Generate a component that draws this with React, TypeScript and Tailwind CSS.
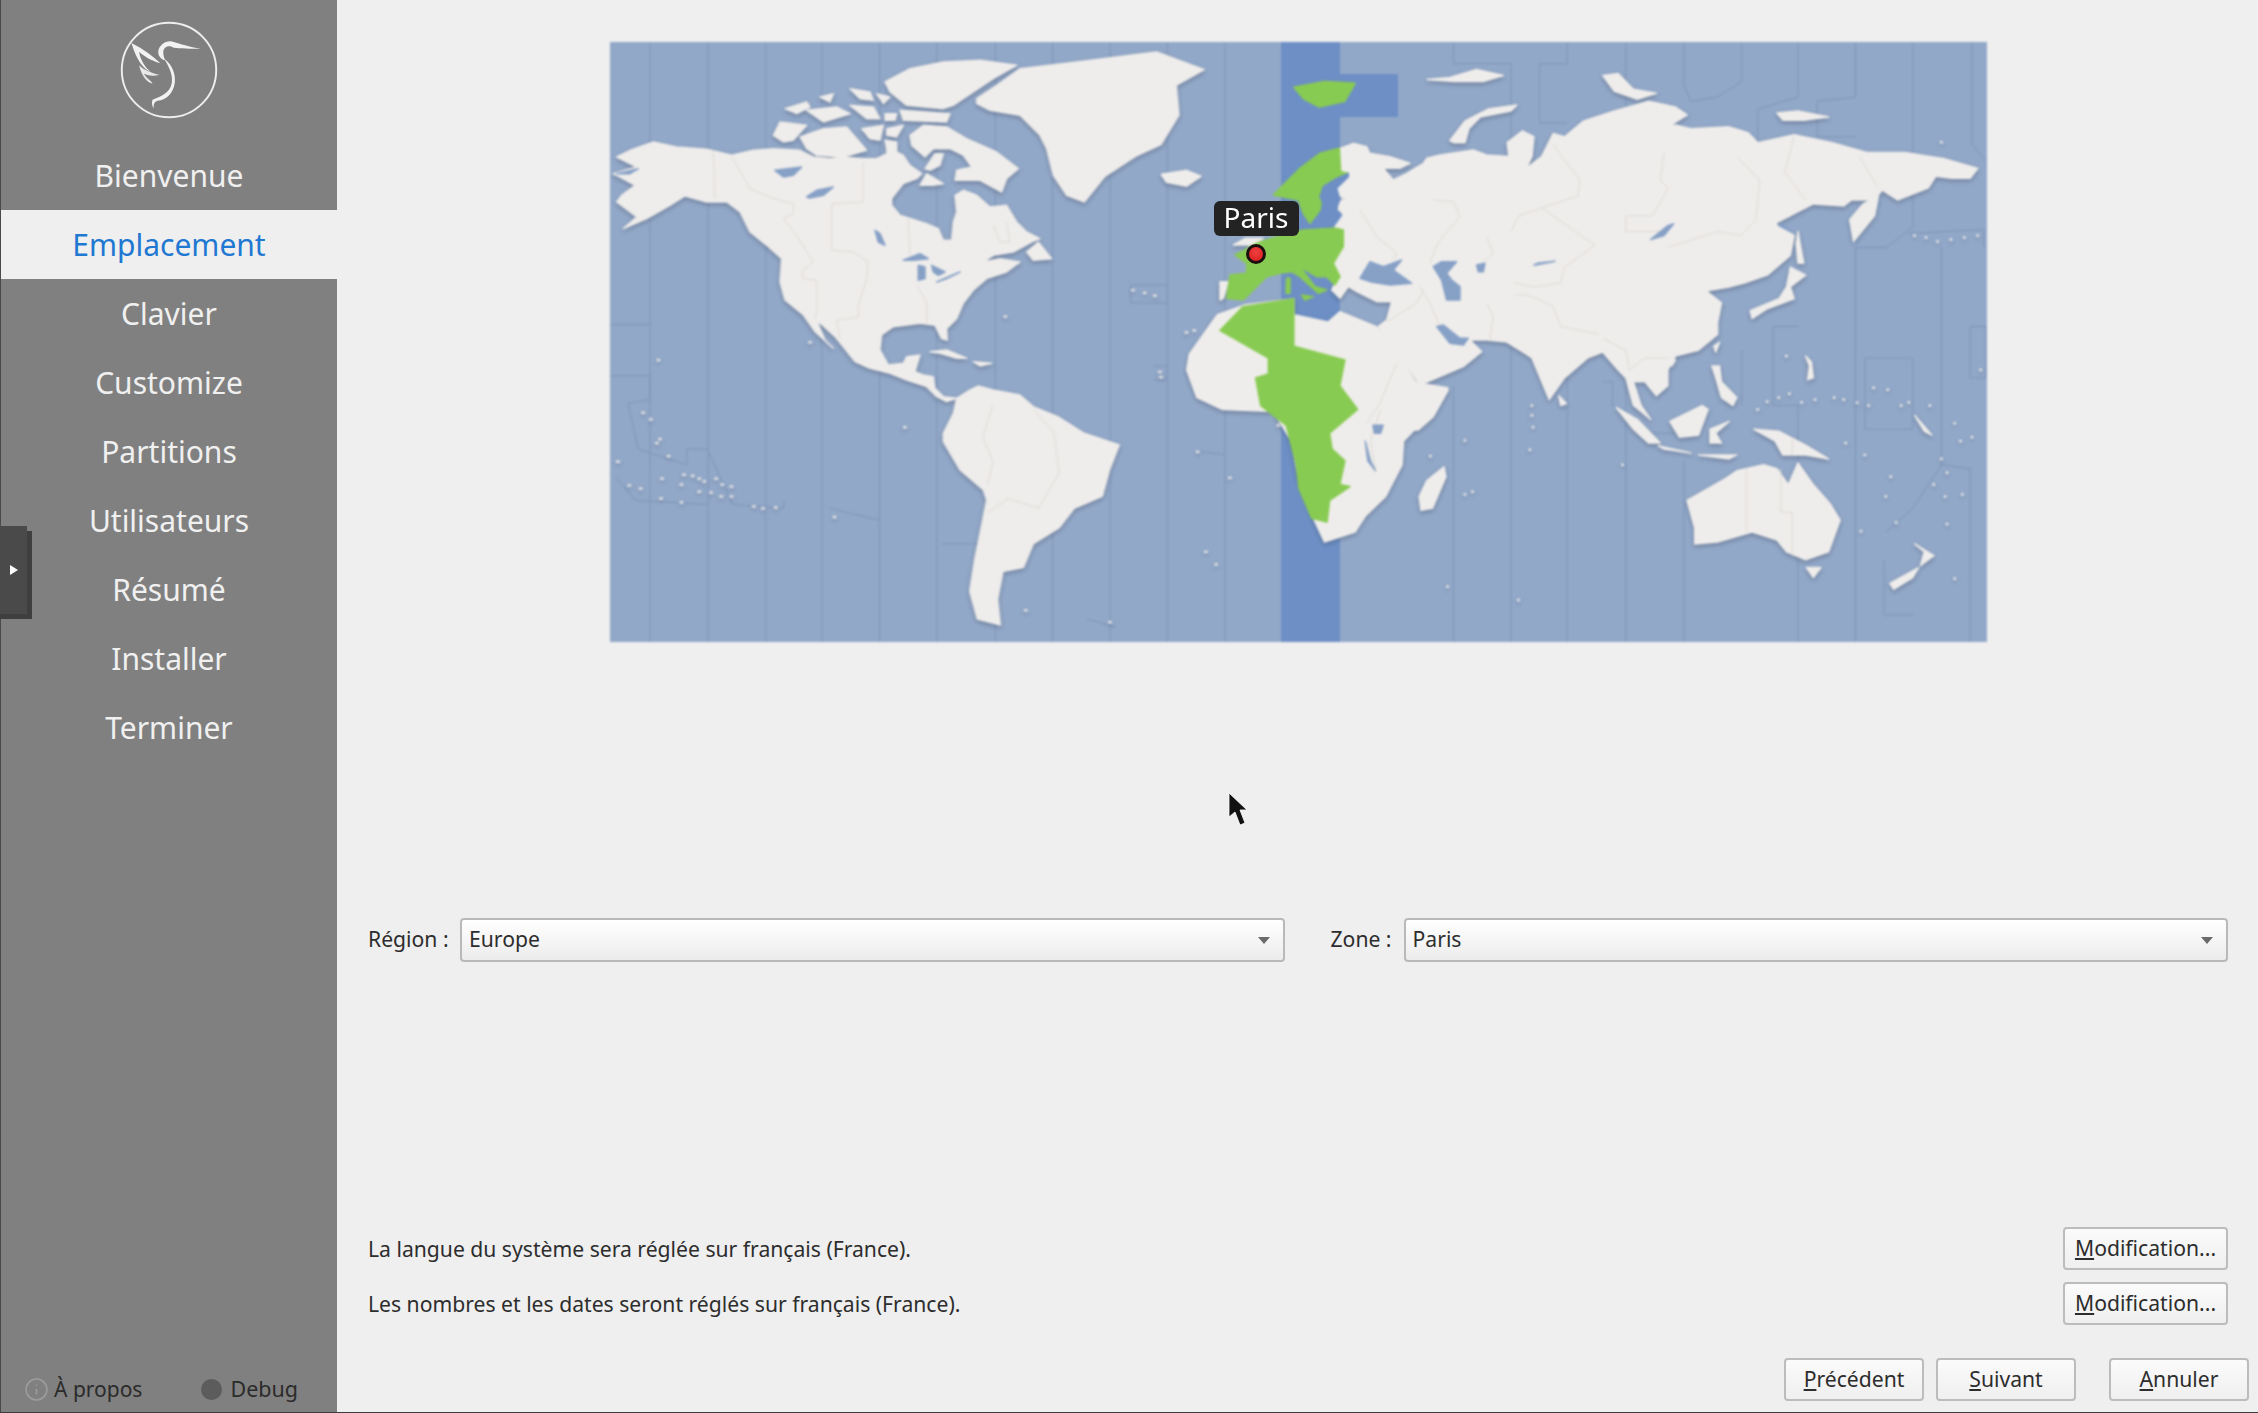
import type { ReactNode } from "react";
import { Info } from "lucide-react";

const steps = ["Bienvenue", "Emplacement", "Clavier", "Customize", "Partitions", "Utilisateurs", "Résumé", "Installer", "Terminer"];

// the map outlines were traced from crops, each piece has its own scale
const WEST = "matrix(0.5102 0 0 0.3953 -10 -12)";
const EAST = "matrix(0.3827 0 0 0.3953 790 -12)";
const NORTH_AM = "matrix(0.3333 0 0 0.3333 0 0)";
const EUROPE = "matrix(0.3333 0 0 0.3333 610 88)";

const northAmLand = [
  "20,345 60,325 130,300 200,315 290,322 365,340 430,325 490,320 570,325 610,345 660,350 700,345 760,350 800,350 830,335 830,310 860,330 880,340 900,370 935,395 920,410 880,425 845,470 845,490 870,520 950,545 985,560 1000,595 1025,595 1030,540 1040,510 1035,460 1060,445 1100,460 1140,495 1190,490 1220,540 1250,570 1290,590 1265,600 1210,630 1150,640 1120,660 1170,650 1230,660 1190,690 1130,710 1090,745 1060,784 1040,830 1010,860 1012,895 995,890 975,850 930,844 850,854 815,879 810,924 835,969 880,964 890,944 930,939 915,989 940,999 970,1004 975,1039 1000,1064 1040,1069 1010,1079 980,1064 950,1034 890,1014 840,994 780,979 735,959 715,934 675,884 620,834 645,894 670,919 615,869 580,819 525,774 510,720 515,650 470,610 420,570 390,510 350,480 290,480 225,462 180,490 110,530 40,560 80,525 20,480 35,460 75,430 10,395 80,375",
  "1250,630 1285,600 1325,650 1270,655",
  "900,280 940,250 1010,255 1070,290 1160,330 1225,380 1190,410 1175,450 1110,415 1035,415 1040,385 1085,375 1060,340 1020,320 970,320 945,345 905,310",
  "930,430 950,395 1000,425 970,430",
  "945,380 975,335 1000,335 990,370 960,385",
  "490,280 510,240 590,250 550,295 520,300",
  "570,285 640,260 710,255 770,325 700,345 620,340 590,320",
  "525,200 590,180 600,195 560,215",
  "590,205 680,195 720,215 640,240",
  "630,165 670,155 660,180",
  "720,140 780,150 790,175 750,170",
  "800,155 840,165 820,185",
  "720,190 790,195 810,230 770,230",
  "755,260 820,250 810,295 780,290",
  "830,260 880,250 860,285 830,280",
  "825,295 860,300 860,335 830,320",
  "825,120 900,80 1000,60 1110,55 1220,70 1150,110 1060,170 1030,190 1000,200 890,190 840,150",
  "870,205 1020,215 1010,240 880,235",
  "825,215 860,215 855,235 825,235",
  "1100,170 1160,130 1230,80 1400,60 1560,40 1640,30 1783,83 1699,130 1707,219 1653,308 1577,343 1485,403 1423,480 1370,460 1330,400 1310,320 1290,280 1230,220 1140,205 1100,185",
  "960,929 1010,924 1070,949 1040,949 990,934",
  "1090,959 1145,964 1110,972",
  "1040,1069 1080,1044 1105,1032 1150,1044 1230,1059 1270,1094 1347,1126 1423,1174 1528,1209 1500,1280 1477,1363 1393,1399 1347,1458 1270,1506 1240,1577 1179,1589 1163,1672 1171,1749 1102,1731 1079,1648 1094,1553 1110,1474 1130,1374 1120,1344 1050,1284 1000,1199 1000,1174 1030,1114",
];
const northAmLakes = [
  "590,465 620,445 670,435 640,460 600,468",
  "495,385 575,375 550,400 520,405",
  "795,565 810,575 825,610 805,600",
  "880,655 930,635 955,650 910,655",
  "925,670 945,675 945,710 925,715",
  "965,670 1005,690 985,700 970,690",
  "980,720 1050,690 1010,710",
  "20,395 85,380 60,395",
];
const northAmBorders = [
  "365,345 420,440 490,470 550,485 550,515 520,530 560,580 610,660 575,690 580,710 620,715 620,810 615,830",
  "760,360 760,480 665,485 665,625 730,630 775,660 770,710 745,790 745,825 680,835 690,890",
  "895,530 900,640",
  "920,730 950,780 950,850",
  "310,325 315,470",
  "1150,550 1170,600 1200,600 1190,540",
];

const westLand = [
  "1100,365 1150,355 1178,370 1150,395 1110,385",
  "1155,820 1210,720 1265,695 1360,680 1360,720 1450,745 1500,745 1540,800 1590,890 1662,905 1643,950 1605,1000 1575,1040 1572,1100 1540,1180 1500,1230 1480,1270 1420,1295 1400,1240 1370,1140 1355,1040 1320,965 1220,960 1170,930 1150,860",
];
const westGreen = [
  "1360,145 1420,130 1480,135 1460,180 1410,195 1380,175",
  "1215,760 1260,700 1360,680 1360,800 1460,835 1450,900 1485,960 1430,1020 1435,1060 1460,1090 1450,1150 1470,1155 1430,1190 1425,1245 1395,1235 1370,1160 1365,1100 1345,1000 1295,950 1285,880 1310,870 1310,830",
];
const westLakes = ["1515,1000 1535,1000 1530,1020 1518,1020", "1500,1040 1510,1090 1520,1115 1505,1090"];
const westZones = [
  "98,32 98,1548", "212,32 212,1548", "325,32 325,1548", "435,32 435,1548", "548,32 548,1548",
  "660,32 660,1548", "775,32 775,1548", "887,32 887,1548", "1000,32 1000,1548", "1112,32 1112,1548", "1225,32 1225,1548",
  "20,745 98,745", "20,875 98,875 98,935 55,945 75,1060 170,1100 170,1060 210,1060 260,1200 360,1210 360,1190",
  "30,1130 70,1190 210,1200", "1040,645 1112,645 1112,690 1040,690 1040,645", "450,1210 548,1240", "670,1300 775,1300",
  "1085,850 1112,850 1112,885 1085,885", "1170,1065 1225,1075", "955,1490 1010,1510",
];
const westBorders = ["770,950 750,1030 770,1090 760,1150", "850,960 890,1020 900,1120 860,1210 800,1185 760,1220", "1530,960 1510,1040 1520,1110"];
const westDots = [
  [85,968],[100,985],[118,1035],[112,1045],[135,1078],[36,1092],[122,1135],[58,1152],[80,1160],[120,1185],[160,1195],[165,1125],[182,1128],[195,1135],[205,1142],[228,1135],
  [240,1150],[258,1155],[160,1150],[195,1168],[218,1170],[238,1180],[258,1180],[302,1205],[320,1210],[345,1208],[115,835],[460,1232],[1045,658],[1068,665],[1088,672],[795,725],
  [1172,1067],[1235,1133],[1188,1320],[1208,1352],[1098,865],[1100,878],[1150,765],[1165,760],[1330,1000],[835,1468],[1000,1498],[412,790],[598,1005],
];

const europeLand = [
  "360,55 400,40 440,50 450,70 510,80 570,100 540,115 490,115 520,150 560,130 610,100 620,85 660,75 760,60 800,75 880,80 880,640 861,636 800,630 750,630 785,665 730,710 600,765 590,750 530,670 475,590 500,570 515,515 470,515 410,485 385,470 360,505 335,480 345,460 360,440 340,400 370,350 365,300 340,290 345,260 370,250 355,240 360,210 440,210 370,205 350,190 355,160 385,130 360,120",
  "215,590 230,560 320,580 360,545 470,590 530,670 590,760 600,770 685,780 640,860 595,900 300,900",
  "40,345 75,325 130,325 100,345 60,345",
  "0,455 25,455 10,505 0,510",
];
const europeGreen = [
  "160,195 240,115 300,70 358,55 362,125 385,130 340,160 310,180 300,240 270,280 250,250 235,210",
  "250,300 340,293 370,300 370,350 340,400 360,440 345,465 320,440 290,440 240,410 285,470 320,480 295,490 240,440 215,425 180,430 140,440 100,480 70,510 20,505 25,470 30,435 80,430 80,400 45,375 75,360 110,340 170,320",
  "200,445 210,445 210,490 198,490",
  "245,495 280,500 255,510",
];
const europeLakes = [
  "420,445 450,395 490,410 545,390 520,420 575,460 510,465 450,455",
  "640,410 665,395 710,395 680,430 695,450 720,470 720,510 680,510 665,450",
  "770,405 795,400 790,425 775,425",
  "650,590 670,585 720,625 745,625 730,645 690,640",
];
const europeBaltic = "385,130 350,145 310,170 300,200 320,245 300,280 250,295 340,290 365,255 345,240 360,210 350,175 385,140";
const europeBorders = [
  "420,240 470,320 530,370 520,390", "640,210 700,215 720,260 660,330 640,370 630,400", "800,320 820,370 790,400",
  "600,470 630,520 660,590", "500,575 590,520 610,480", "530,700 480,820 440,880", "800,520 820,560 810,630",
];

const eastLand = [
  "285,325 280,285 320,255 350,270 345,320 330,350 370,320 400,262 430,270 480,230 560,205 650,180 720,195 750,215 700,245 720,240 760,250 860,245 910,260 935,285 1030,265 1130,285 1220,310 1320,310 1420,325 1510,350 1490,375 1440,375 1400,370 1380,400 1300,430 1260,405 1240,430 1180,430 1160,445 1080,440 980,490 1030,520 1020,570 960,620 900,640 860,650 800,660 840,690 830,740 830,770 780,810 720,825 700,860 700,900 670,925 640,890 610,890 630,950 655,985 610,950 590,880 570,860 530,815 490,830 430,880 390,935 345,830 330,820 280,790",
  "130,280 170,230 230,200 305,190 290,205 210,220 180,250 170,285 140,285",
  "70,125 130,120 200,100 270,115 220,130 140,130",
  "530,115 570,110 610,150 670,160 620,175 560,155",
  "985,210 1040,205 1120,220 1060,228 1000,228",
  "1040,510 1055,590 1040,590 1035,540",
  "1020,600 1060,620 1020,650 1030,680 960,705 920,730 915,710 990,680 1010,650",
  "1250,420 1240,470 1185,535 1175,480 1210,440",
  "415,925 435,945 420,950",
  "115,1105 120,1130 85,1210 55,1215 50,1180 70,1140",
  "565,955 620,985 680,1045 650,1045 610,1010",
  "675,1052 760,1070 690,1060",
  "780,1075 880,1075 860,1085",
  "705,990 790,950 805,960 780,1025 730,1030",
  "810,1010 860,990 825,1020 840,1045 810,1045",
  "815,850 835,850 840,890 880,930 870,950 840,930 825,880",
  "820,800 835,790 825,815",
  "705,835 720,835 710,850",
  "925,1010 990,1015 1060,1050 1120,1085 1060,1075 1000,1075 980,1040",
  "750,1190 850,1135 880,1115 950,1100 985,1110 1015,1150 1040,1095 1080,1150 1125,1200 1150,1240 1120,1320 1060,1340 1010,1320 985,1290 920,1270 830,1295 770,1300 770,1260",
  "1062,1360 1100,1360 1080,1385",
  "1345,1300 1395,1330 1360,1355 1370,1320",
  "1355,1360 1340,1385 1290,1415 1280,1400",
  "1060,825 1075,840 1080,880 1065,885 1070,850",
  "1345,975 1390,1025 1370,1015",
];
const eastLakes = ["655,530 700,495 715,490 690,520", "350,595 405,585 360,590", "1000,490 1020,510 990,495"];
const eastZones = [
  "140,32 140,85 290,85 290,1548", "437,32 437,85 365,85 365,235 437,235", "590,32 590,1548", "742,32 742,140 760,180 830,170 893,130 893,32",
  "1040,32 1040,170 935,200 935,290", "1190,32 1190,170 1090,180 1090,270 1190,270", "1340,32 1340,500 1270,550 1190,550 1190,1548",
  "1495,32 1495,290 1530,330", "1415,550 1415,1100 1490,1110 1490,1548", "1330,515 1525,505 1525,550", "1040,750 975,750 975,950 1040,950 1040,1548",
  "1215,830 1340,830 1340,1010 1215,1010 1215,830", "140,900 140,1548", "437,850 437,1548", "742,1090 742,1548", "893,810 893,950",
  "1490,750 1530,750 1530,880 1490,880 1490,750", "1270,1270 1340,1210 1415,1100", "1265,1340 1265,1480 1340,1480", "530,890 555,890 555,950 660,1020 740,1020",
];
const eastBorders = [
  "400,290 470,380 465,420 370,450 310,470 290,510", "690,310 680,380 700,400 660,470 590,470 590,510 700,510", "880,320 940,380 930,480 890,520 830,510 700,550",
  "370,450 510,545 430,600 420,640 350,650 300,640", "1030,270 1005,360 1060,430", "1200,320 1250,400", "300,670 330,670 360,680 400,700 420,750 520,770",
  "530,780 590,810 600,860 640,830 700,830", "905,1110 905,1270", "995,1110 995,1220 1025,1220 1025,1330", "1025,1030 1025,1075",
];
const eastDots = [
  [1415,284],[1010,825],[935,960],[960,940],[990,930],[1018,920],[1050,942],[1085,935],[1135,930],[1160,935],[1195,943],[1225,950],[1238,905],[1275,910],[1310,950],[1330,942],[1385,950],
  [1450,995],[1465,1040],[1495,1030],[1415,1085],[1430,1120],[1395,1150],[1425,1180],[1470,1175],[1430,1250],[1297,1246],[1205,1268],[1450,1388],[1283,1130],[1270,1180],[1345,520],[1375,525],
  [1405,535],[1440,530],[1475,525],[1510,520],[345,950],[345,975],[348,1005],[170,1038],[340,1062],[80,1078],[170,1175],[190,1168],[582,1100],[125,1408],[310,1442],[1518,860],[1215,1075],[1165,1045],
];

function Polys({ transform, points, fill }: { transform: string; points: string[]; fill: string }) {
  return (
    <g transform={transform} fill={fill} stroke={fill} strokeWidth="1.5" strokeLinejoin="round">
      {points.map((p) => (
        <polygon key={p} points={p} vectorEffect="non-scaling-stroke" />
      ))}
    </g>
  );
}

function Lines({ transform, points, color }: { transform: string; points: string[]; color: string }) {
  return (
    <g transform={transform} fill="none" stroke={color} strokeWidth="1">
      {points.map((p) => (
        <polyline key={p} points={p} vectorEffect="non-scaling-stroke" />
      ))}
    </g>
  );
}

function Dots({ transform, dots }: { transform: string; dots: number[][] }) {
  return (
    <g transform={transform} fill="#efedeb">
      {dots.map(([x, y]) => (
        <rect key={`${x}-${y}`} x={x - 4} y={y - 3} width="7" height="6" />
      ))}
    </g>
  );
}

function WorldMap() {
  const land = "#efedeb";
  const green = "#88cb52";
  const lake = "#86a0c6";
  const border = "#dcd8d4";
  return (
    <svg viewBox="0 0 1377 600" className="block h-[600px] w-[1377px] blur-[0.8px]">
      <rect width="1377" height="600" fill="#92a8c8" />
      <rect x="671" width="59" height="600" fill="#6d8fc5" />
      <rect x="730" y="32" width="58" height="43" fill="#6d8fc5" />
      <Lines transform={WEST} points={westZones} color="#7f95b8" />
      <Lines transform={EAST} points={eastZones} color="#7f95b8" />
      <g className="drop-shadow-[0_2px_2px_rgba(50,60,85,0.4)]">
        <Polys transform={NORTH_AM} points={northAmLand} fill={land} />
        <Polys transform={WEST} points={westLand} fill={land} />
        <Polys transform={EUROPE} points={europeLand} fill={land} />
        <Polys transform={EAST} points={eastLand} fill={land} />
        <Dots transform={WEST} dots={westDots} />
        <Dots transform={EAST} dots={eastDots} />
      </g>
      <Lines transform={NORTH_AM} points={northAmBorders} color={border} />
      <Lines transform={WEST} points={westBorders} color={border} />
      <Lines transform={EUROPE} points={europeBorders} color={border} />
      <Lines transform={EAST} points={eastBorders} color={border} />
      <Polys transform={NORTH_AM} points={northAmLakes} fill={lake} />
      <Polys transform={WEST} points={westLakes} fill={lake} />
      <Polys transform={EUROPE} points={europeLakes} fill={lake} />
      <Polys transform={EAST} points={eastLakes} fill={lake} />
      <Polys transform={WEST} points={westGreen} fill={green} />
      <Polys transform={EUROPE} points={europeGreen} fill={green} />
      <Polys transform={EUROPE} points={[europeBaltic]} fill="#6d8fc5" />
    </svg>
  );
}

function Logo() {
  return (
    <svg viewBox="0 0 110 110" className="h-[106px] w-[106px]">
      <circle cx="55" cy="55" r="49" fill="none" stroke="#eeeeee" strokeWidth="2" />
      <path
        d="M88 33 C76 31 66 28 60 26 C54 23 45 28 44 35 C43 40 47 44 51 45 C50 42 49 40 49 36 C50 30 56 29 60 32 C66 33 78 33 88 33 Z"
        fill="#f2f2f2"
      />
      <path
        d="M50 43 C59 50 62 60 61 68 C60 78 53 86 43 87 C40 88 39 90 39 95 C37 92 37 88 38 86 C46 82 56 80 58 68 C59 59 55 52 50 43 Z"
        fill="#f2f2f2"
      />
      <path d="M16 27 C28 33 38 40 46 48 C36 45 28 40 24 36 C25 44 30 52 36 57 C28 54 21 44 16 27 Z" fill="#f2f2f2" />
      <path d="M24 50 C30 56 38 58 45 60 C38 62 34 61 29 59 C32 64 36 66 38 69 C32 68 26 60 24 50 Z" fill="#e8e8e8" />
    </svg>
  );
}

function Combo({ value }: { value: string }) {
  return (
    <div className="flex h-[44px] flex-1 items-center justify-between rounded-[4px] border-2 border-[#b9b9b9] bg-gradient-to-b from-white to-[#ececec] pl-[7px] pr-[13px]">
      <span className="pb-[2px]">{value}</span>
      <span className="h-0 w-0 border-x-[6px] border-t-[7px] border-x-transparent border-t-[#6a6a6a]" />
    </div>
  );
}

function Btn({ children, className }: { children: ReactNode; className: string }) {
  return (
    <button className={`flex h-[43px] items-center justify-center rounded-[4px] border-2 border-[#bcbcbc] bg-gradient-to-b from-[#fbfbfb] to-[#efefef] pb-[2px] text-[#2d2d2d] ${className}`}>
      {children}
    </button>
  );
}

export default function App() {
  return (
    <div className="relative flex h-[1413px] w-[2258px] overflow-hidden border-b border-[#3c3c3c] bg-[#efefef] font-['Noto_Sans',sans-serif] text-[21.15px] text-[#2d2d2d]">
      <aside className="flex w-[337px] shrink-0 flex-col border-l border-[#4a4a4a] bg-[#808080] text-[30px] text-[#f0f0f0]">
        <div className="flex h-[141px] shrink-0 items-center justify-center pb-[1px]">
          <Logo />
        </div>
        {steps.map((step) =>
          step === "Emplacement" ? (
            <div key={step} className="flex h-[69px] items-center justify-center bg-[#efefef] text-[#1f78d1]">
              {step}
            </div>
          ) : (
            <div key={step} className="flex h-[69px] items-center justify-center">
              {step}
            </div>
          ),
        )}
        <div className="mt-auto flex h-[46px] items-center gap-[59px] pl-[23px] pt-[1px] text-[21px] text-[#2b2b2b]">
          <span className="flex items-center gap-[5px]">
            <Info className="h-[25px] w-[25px] text-[#9c9c9c]" strokeWidth={1.5} />À propos
          </span>
          <span className="flex items-center gap-[8px] text-[21.5px]">
            <span className="h-[21px] w-[21px] rounded-full bg-[#5c5c5c]" />
            Debug
          </span>
        </div>
      </aside>

      <main className="flex min-w-0 flex-1 flex-col pl-[31px] pr-[30px] pt-[42px]">
        <div className="relative mx-auto h-[600px] w-[1377px] shrink-0">
          <WorldMap />
          <div className="absolute left-[604px] top-[159px] flex h-[35px] w-[85px] items-center justify-center rounded-[6px] bg-[#232323] pb-[4px] text-[28px] text-white">
            Paris
          </div>
          <div className="absolute left-[636px] top-[202px] h-[20px] w-[20px] rounded-full border-[3px] border-[#1a1010] bg-[radial-gradient(circle_at_50%_35%,#f04040,#d81c1c)]" />
        </div>

        <div className="mt-[276px] flex h-[44px] items-center">
          <span className="w-[92px] shrink-0 pb-[2px]">Région :</span>
          <Combo value="Europe" />
          <span className="ml-[46px] w-[73px] shrink-0 pb-[2px]">Zone :</span>
          <Combo value="Paris" />
        </div>

        <div className="mt-[265px] flex h-[43px] items-center justify-between">
          <span>La langue du système sera réglée sur français (France).</span>
          <Btn className="w-[165px]">
            <span className="underline">M</span>odification...
          </Btn>
        </div>
        <div className="mt-[12px] flex h-[43px] items-center justify-between">
          <span>Les nombres et les dates seront réglés sur français (France).</span>
          <Btn className="w-[165px]">
            <span className="underline">M</span>odification...
          </Btn>
        </div>

        <div className="-mr-[21px] mt-[33px] flex justify-end">
          <Btn className="w-[140px]">
            <span className="underline">P</span>récédent
          </Btn>
          <Btn className="ml-[12px] w-[140px]">
            <span className="underline">S</span>uivant
          </Btn>
          <Btn className="ml-[33px] w-[140px]">
            <span className="underline">A</span>nnuler
          </Btn>
        </div>
      </main>

      <div className="absolute left-[27px] top-[531px] h-[88px] w-[5px] bg-[#3f3f3f]" />
      <div className="absolute left-0 top-[614px] h-[5px] w-[27px] bg-[#3f3f3f]" />
      <div className="absolute left-0 top-[526px] h-[88px] w-[27px] bg-[#4a4a4a]">
        <span className="absolute left-[10px] top-[39px] h-0 w-0 border-y-[5px] border-l-[8px] border-y-transparent border-l-white" />
      </div>

      <svg viewBox="0 0 20 36" className="absolute left-[1228px] top-[792px] h-[36px] w-[20px]">
        <path d="M1 1 L1 25 L7 20 L12 33 L17 31 L12 18 L19 18 Z" fill="#111" stroke="#fff" strokeWidth="0.8" />
      </svg>
    </div>
  );
}
